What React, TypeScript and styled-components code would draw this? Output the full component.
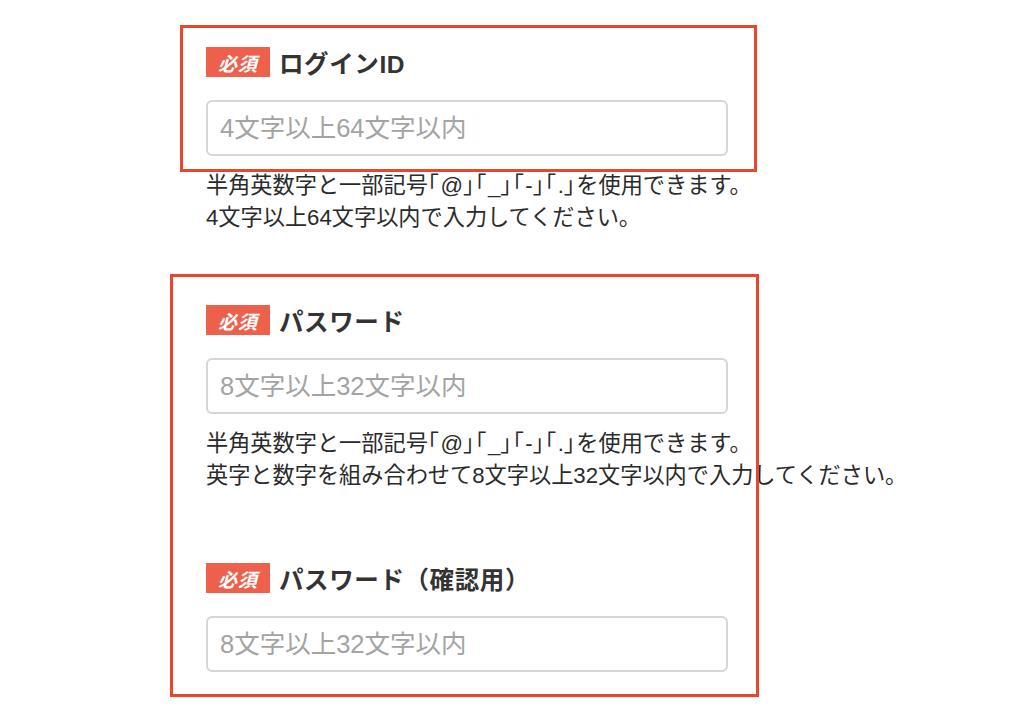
import React from "react";
import styled, { createGlobalStyle } from "styled-components";

const GlobalStyle = createGlobalStyle`
  html, body {
    margin: 0;
    padding: 0;
    background: #ffffff;
  }
  body {
    font-family: "Liberation Sans", "Noto Sans CJK JP", sans-serif;
    color: #333333;
  }
`;

const Page = styled.div`
  position: relative;
  width: 1024px;
  height: 714px;
  box-sizing: border-box;
  padding: 47px 0 0 206px;
  overflow: hidden;
`;

const Form = styled.form`
  display: flex;
  flex-direction: column;
  gap: 71px;
  width: 522px;
`;

const Field = styled.div`
  display: flex;
  flex-direction: column;
`;

const LabelRow = styled.label`
  display: flex;
  align-items: center;
  gap: 9px;
  height: 30px;
`;

const Badge = styled.span`
  display: inline-flex;
  align-items: center;
  justify-content: center;
  width: 64px;
  height: 30px;
  background: #ec604c;
  color: #ffffff;
  font-size: 19px;
  font-weight: 700;
  font-style: italic;
  letter-spacing: 1px;
`;

const LabelText = styled.span`
  font-size: 24.5px;
  font-weight: 700;
  color: #333333;
  letter-spacing: 0.6px;
`;

const Input = styled.input`
  box-sizing: border-box;
  width: 522px;
  height: 56px;
  margin-top: 23px;
  padding: 0 12px;
  border: 2px solid #d6d6d6;
  border-radius: 6px;
  font-family: "Liberation Sans", "Noto Sans CJK JP", sans-serif;
  font-size: 25.5px;
  color: #333333;
  outline: none;
  &::placeholder {
    color: #a3a3a3;
  }
`;

const Help = styled.p`
  margin: 14px 0 0 0;
  font-size: 22.2px;
  line-height: 32px;
  color: #2a2a2a;
  white-space: nowrap;
`;

const Bracket = styled.span`
  font-feature-settings: "halt";
  letter-spacing: 1.4px;
`;

const Highlight = styled.div<{ $x: number; $y: number; $w: number; $h: number }>`
  position: absolute;
  left: ${(p) => p.$x}px;
  top: ${(p) => p.$y}px;
  width: ${(p) => p.$w}px;
  height: ${(p) => p.$h}px;
  box-sizing: border-box;
  border: 3px solid #ea452d;
  pointer-events: none;
`;

const SYMBOLS = ["@", "_", "-", "."];

function SymbolLine() {
  return (
    <>
      半角英数字と一部記号
      {SYMBOLS.map((s) => (
        <React.Fragment key={s}>
          <Bracket>「</Bracket>
          {s}
          <Bracket>」</Bracket>
        </React.Fragment>
      ))}
      を使用できます。
    </>
  );
}

type FieldProps = {
  label: string;
  placeholder: string;
  type?: string;
  help?: string;
};

function FormField({ label, placeholder, type = "text", help }: FieldProps) {
  return (
    <Field>
      <LabelRow>
        <Badge>必須</Badge>
        <LabelText>{label}</LabelText>
      </LabelRow>
      <Input type={type} placeholder={placeholder} />
      {help && (
        <Help>
          <SymbolLine />
          <br />
          {help}
        </Help>
      )}
    </Field>
  );
}

export default function App() {
  return (
    <>
      <GlobalStyle />
      <Page>
        <Form onSubmit={(e) => e.preventDefault()}>
          <FormField
            label="ログインID"
            placeholder="4文字以上64文字以内"
            help="4文字以上64文字以内で入力してください。"
          />
          <FormField
            label="パスワード"
            type="password"
            placeholder="8文字以上32文字以内"
            help="英字と数字を組み合わせて8文字以上32文字以内で入力してください。"
          />
          <FormField
            label="パスワード（確認用）"
            type="password"
            placeholder="8文字以上32文字以内"
          />
        </Form>
        <Highlight $x={180} $y={25} $w={577} $h={147} />
        <Highlight $x={170} $y={274} $w={589} $h={423} />
      </Page>
    </>
  );
}
